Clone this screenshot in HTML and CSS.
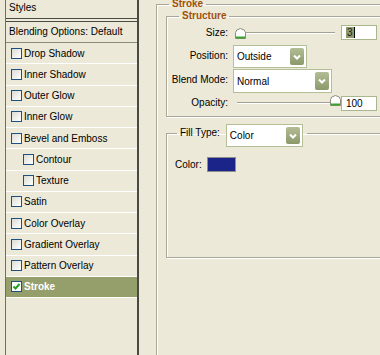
FILE: index.html
```html
<!DOCTYPE html>
<html lang="en">
<head>
  <meta charset="UTF-8">
  <title>Layer Style - Stroke</title>
  <link rel="stylesheet" href="styles.css">
</head>
<body>
  <div class="window">

    <!-- Styles list -->
    <div class="styles-panel">
      <div class="panel-head">Styles</div>
      <div class="blend-row">Blending Options: Default</div>
      <ul class="effects">
        <li class="effect"><span class="check"></span>Drop Shadow</li>
        <li class="effect"><span class="check"></span>Inner Shadow</li>
        <li class="effect"><span class="check"></span>Outer Glow</li>
        <li class="effect"><span class="check"></span>Inner Glow</li>
        <li class="effect"><span class="check"></span>Bevel and Emboss</li>
        <li class="effect sub"><span class="check"></span>Contour</li>
        <li class="effect sub"><span class="check"></span>Texture</li>
        <li class="effect"><span class="check"></span>Satin</li>
        <li class="effect"><span class="check"></span>Color Overlay</li>
        <li class="effect"><span class="check"></span>Gradient Overlay</li>
        <li class="effect"><span class="check"></span>Pattern Overlay</li>
        <li class="effect active">
          <span class="check checked">
            <svg width="9" height="9" viewBox="0 0 9 9"><path d="M1.5 4.5 L3.5 6.5 L7.5 2" fill="none" stroke="#21a121" stroke-width="2"/></svg>
          </span>Stroke
        </li>
      </ul>
    </div>

    <!-- Stroke settings -->
    <fieldset class="group outer">
      <legend class="title">Stroke</legend>

      <fieldset class="group structure">
        <legend class="title">Structure</legend>
        <div class="form">
          <div class="row row-size">
            <label>Size:</label>
            <div class="slider">
              <div class="track"></div>
              <svg class="thumb thumb-size" width="11" height="11" viewBox="0 0 11 11"><path d="M0.5 10.5 V4.5 Q0.5 1.5 5.5 0.5 Q10.5 1.5 10.5 4.5 V10.5 Z" fill="#fff" stroke="#8d8b7d"/><path d="M1 9.5 H10" stroke="#3ca22e" stroke-width="2"/></svg>
            </div>
            <div class="num"><span class="hl">3</span><span class="caret"></span></div>
          </div>
          <div class="row row-position">
            <label>Position:</label>
            <div class="select sel-position">
              <span class="value">Outside</span>
              <span class="arrow"><svg width="8" height="6" viewBox="0 0 8 6"><path d="M1 1.5 L4 4.5 L7 1.5" fill="none" stroke="#fff" stroke-width="2"/></svg></span>
            </div>
          </div>
          <div class="row row-blend">
            <label>Blend Mode:</label>
            <div class="select sel-blend">
              <span class="value">Normal</span>
              <span class="arrow"><svg width="8" height="6" viewBox="0 0 8 6"><path d="M1 1.5 L4 4.5 L7 1.5" fill="none" stroke="#fff" stroke-width="2"/></svg></span>
            </div>
          </div>
          <div class="row row-opacity">
            <label>Opacity:</label>
            <div class="slider">
              <div class="track"></div>
              <svg class="thumb thumb-opacity" width="11" height="11" viewBox="0 0 11 11"><path d="M0.5 10.5 V4.5 Q0.5 1.5 5.5 0.5 Q10.5 1.5 10.5 4.5 V10.5 Z" fill="#fff" stroke="#8d8b7d"/><path d="M1 9.5 H10" stroke="#3ca22e" stroke-width="2"/></svg>
            </div>
            <div class="num">100</div>
          </div>
        </div>
      </fieldset>

      <fieldset class="group fill">
        <legend class="fill-legend">
          <span class="fill-label">Fill Type:</span>
          <div class="select sel-fill">
            <span class="value">Color</span>
            <span class="arrow"><svg width="8" height="6" viewBox="0 0 8 6"><path d="M1 1.5 L4 4.5 L7 1.5" fill="none" stroke="#fff" stroke-width="2"/></svg></span>
          </div>
        </legend>
        <div class="color-row">
          <span>Color:</span>
          <span class="swatch"></span>
        </div>
      </fieldset>
    </fieldset>

  </div>
</body>
</html>
```

FILE: styles.css
```css
* {
  box-sizing: border-box;
}
body {
  margin: 0;
  height: 355px;
  overflow: hidden;
  background-color: #ece9d8;
  font-family: "Liberation Sans", Arial, sans-serif;
  font-size: 10px;
  color: #000;
}
.window {
  display: flex;
  align-items: flex-start;
  height: 355px;
  overflow: hidden;
}

/* Styles list */
.styles-panel {
  flex: none;
  width: 134px;
  height: 355px;
  margin-left: 5px;
  border-left: 1px solid #706f66;
  border-right: 2px solid #4a4a44;
}
.panel-head {
  height: 19px;
  line-height: 16px;
  padding-left: 3px;
  border-bottom: 1px solid #4a4a44;
}
.blend-row {
  height: 22px;
  margin-top: 2px;
  line-height: 20px;
  padding-left: 3px;
  border-top: 1px solid #4a4a44;
  border-bottom: 1px solid #8c8a7e;
}
.effects {
  list-style: none;
  margin: 0;
  padding: 0;
}
.effect {
  display: flex;
  align-items: center;
  height: 21.25px;
  padding-left: 5px;
  border-bottom: 1px solid #fff;
}
.effect.sub {
  padding-left: 17px;
}
.effect.active {
  background-color: #949f6c;
  color: #fff;
  font-weight: bold;
}
.check {
  flex: none;
  display: flex;
  align-items: center;
  justify-content: center;
  width: 11px;
  height: 11px;
  margin-right: 2px;
  border: 1px solid #1c5180;
  background: linear-gradient(135deg, #dcdcd4, #fff);
}
.check.checked {
  background: #fff;
}

/* Group boxes */
.group {
  margin: 0;
  padding: 0;
  min-width: 0;
  border: 1px solid #a9a798;
  box-shadow: inset 1px 1px 0 #fff, 1px 1px 0 #fff;
}
legend {
  padding: 0 3px;
}
.title {
  font-weight: bold;
  color: #a0500a;
  line-height: 12px;
}
.outer {
  flex: none;
  width: 240px;
  height: 370px;
  margin: -2px 0 0 17px;
  padding: 0 0 0 9px;
}
.outer > legend {
  margin-left: 3px;
}
.structure {
  width: 230px;
  height: 107px;
}
.structure > legend {
  margin-left: 12px;
}
.form {
  padding-top: 3px;
}
.row {
  display: flex;
  align-items: center;
}
.row label {
  width: 61px;
  margin-right: 5px;
  text-align: right;
}
.row-size {
  height: 15px;
}
.row-position {
  margin-top: 5px;
}
.row-position label,
.row-blend label {
  padding-bottom: 3px;
}
.row-blend {
  margin-top: 1px;
}
.row-opacity {
  height: 14px;
  margin-top: 3px;
}
.row-opacity label {
  padding-bottom: 1px;
}

/* Slider */
.slider {
  position: relative;
  display: flex;
  align-items: center;
  width: 104px;
  height: 100%;
  padding: 0 2px 0 4px;
}
.track {
  flex: 1;
  height: 2px;
  border-top: 1px solid #a3a193;
  border-bottom: 1px solid #fff;
}
.thumb {
  position: absolute;
}
.thumb-size {
  left: 2px;
  top: 3px;
}
.thumb-opacity {
  left: 97px;
  top: -1px;
}

/* Number field */
.num {
  display: flex;
  align-items: center;
  width: 36px;
  height: 15px;
  margin-left: 4px;
  padding-left: 4px;
  background-color: #fff;
  border: 1px solid #aab68b;
}
.hl {
  padding: 0 1px;
  background-color: #8d9a6a;
  color: #1d1d1d;
  line-height: 11px;
}
.caret {
  width: 1px;
  height: 11px;
  background-color: #000;
}

/* Dropdowns */
.select {
  display: flex;
  padding: 2px;
  background-color: #fff;
  border: 1px solid #b4bf98;
  font-weight: normal;
  color: #000;
}
.select .value {
  flex: 1;
  display: flex;
  align-items: center;
  padding-left: 1px;
}
.arrow {
  display: flex;
  align-items: center;
  justify-content: center;
  width: 14px;
  border-radius: 2px;
  background: linear-gradient(#b3bd96, #8b996a);
}
.sel-position {
  width: 74px;
  height: 23px;
}
.sel-blend {
  width: 99px;
  height: 24px;
}
.sel-fill {
  width: 77px;
  height: 23px;
  margin-bottom: -4px;
}

/* Fill type */
.fill {
  width: 230px;
  height: 134px;
  margin-top: 7px;
}
.fill-legend {
  display: flex;
  align-items: flex-start;
  margin-left: 10px;
  padding: 0 4px 0 3px;
}
.fill-label {
  margin-top: 3px;
  margin-right: 6px;
  line-height: 12px;
}
.color-row {
  display: flex;
  align-items: center;
  padding: 14px 0 0 8px;
}
.swatch {
  width: 29px;
  height: 15px;
  margin-left: 5px;
  background-color: #1b2488;
  border: 1px solid #8e8e8e;
}
```
